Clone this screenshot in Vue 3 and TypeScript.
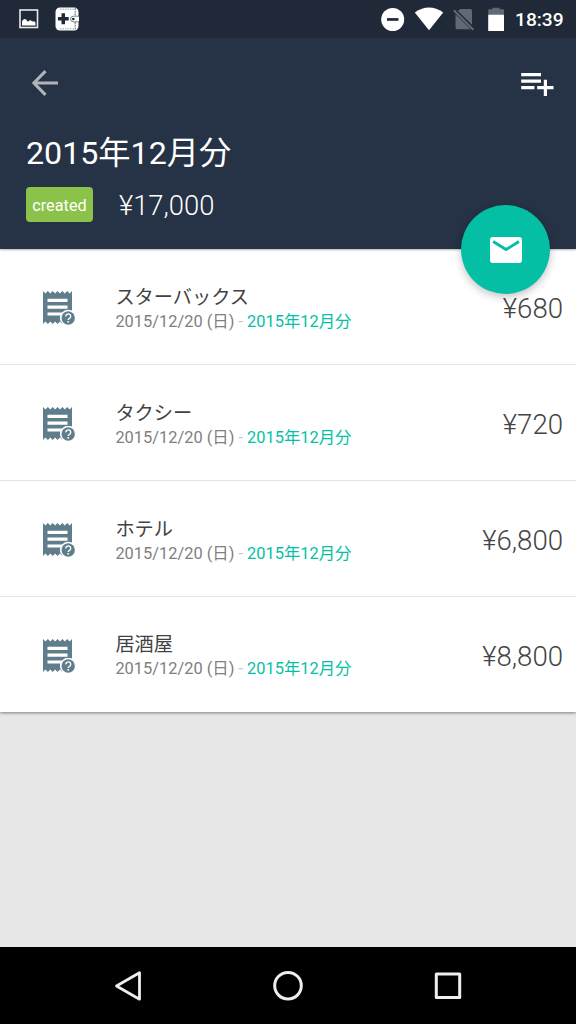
<script setup lang="ts">
interface Expense {
  name: string
  date: string
  report: string
  amount: string
}

const date = '2015/12/20 (日)'
const report = '2015年12月分'
const expenses: Expense[] = [
  { name: 'スターバックス', date, report, amount: '¥680' },
  { name: 'タクシー', date, report, amount: '¥720' },
  { name: 'ホテル', date, report, amount: '¥6,800' },
  { name: '居酒屋', date, report, amount: '¥8,800' },
]
</script>

<template>
  <div class="screen">
    <div class="status">
      <svg class="photo" width="20" height="20" viewBox="0 0 20 20">
        <rect x="1" y="1" width="17.5" height="17.5" fill="none" stroke="#e8eaec" stroke-width="1.6" />
        <path d="M3 16.5V12.3C4 10 6 9 7.600 11Q8.500 13 9.500 12.400C10.500 10.800 12 10.800 13 12.400Q16.500 11.800 16.500 14V16.500Z" fill="#fff" />
      </svg>
      <svg class="wallet" width="24" height="24" viewBox="0 0 24 24">
        <rect x=".5" y=".5" width="23" height="23" rx="4.500" fill="#fff" />
        <path d="M6.500 6.300h3.500v3.700h3.700v3.500H10v3.800H6.500v-3.800H2.900V10h3.600z" fill="#1f2938" />
        <path d="M5 2.200H19M5 21.800H19" stroke="#8a9099" stroke-width=".8" stroke-dasharray="1.500 1" fill="none" />
        <path d="M20.200 1V9M20.200 15V23" stroke="#5b636f" stroke-width=".9" stroke-dasharray="2 .7" />
        <path d="M24 9.200H18.400a2.800 2.800 0 0 0 0 5.600H24" fill="#fff" stroke="#59616d" stroke-width=".8" />
        <circle cx="18.300" cy="12" r="1.300" fill="#1f2938" />
      </svg>
      <span class="gap"></span>
      <svg width="125" height="38" viewBox="380 0 125 38" class="system">
        <circle cx="392.700" cy="19.500" r="11.500" fill="#fff" />
        <rect x="387" y="18.100" width="11.500" height="2.700" fill="#1f2938" />
        <path d="M414.800 12.500Q429 2.700 443.200 12.500L429 30.300Z" fill="#fff" />
        <path d="M460.300 9H470.500Q472 9 472 10.500V24.800L457.800 10.900ZM455.500 14.300L470.600 29.200H457.300Q455.500 29.200 455.500 27.500Z" fill="#626975" />
        <path d="M453.800 10.200L473.300 29.800" stroke="#626975" stroke-width="2" />
        <path d="M488.200 15V10Q488.200 9.200 489 9.200H492.500V7.700H499.700V9.200H503.200Q504 9.200 504 10V15Z" fill="#626975" />
        <rect x="488.200" y="14.800" width="15.800" height="16.200" rx=".6" fill="#fff" />
      </svg>
      <span class="clock">18:39</span>
    </div>

    <header class="header">
      <div class="toolbar">
        <svg width="26" height="26" viewBox="0 0 26 26">
          <path d="M26 13H2M13.500 1.200L1.900 13L13.500 24.800" fill="none" stroke="#b0b4ba" stroke-width="3.100" />
        </svg>
        <svg class="add" width="34" height="24" viewBox="0 0 34 24">
          <path d="M1.200 2.700H21M1.200 9.200H21M1.200 15.600H14.400M17.200 15.600H33.500M25.400 7.800V24" fill="none" stroke="#fff" stroke-width="3.200" />
        </svg>
      </div>
      <h1 class="title">2015年12月分</h1>
      <div class="summary">
        <span class="tag">created</span>
        <span class="total">¥17,000</span>
      </div>
      <button class="fab" aria-label="mail">
        <svg width="32" height="26" viewBox="0 0 32 26">
          <rect width="32" height="26" rx="3.100" fill="#fff" />
          <path d="M3.100 4.600L16 12.600L28.900 4.600" fill="none" stroke="#05bfa5" stroke-width="2.900" />
        </svg>
      </button>
    </header>

    <main class="list">
      <div v-for="item in expenses" :key="item.name" class="row">
        <svg class="receipt" width="34" height="36" viewBox="0 0 34 36">
          <path d="M1 1L3.420 3.400L5.840 1L8.260 3.400L10.680 1L13.100 3.400L15.520 1L17.940 3.400L20.360 1L22.780 3.400L25.200 1L27.600 3.400L30 1V34L27.600 31.600L25.200 34L22.780 31.600L20.360 34L17.940 31.600L15.520 34L13.100 31.600L10.680 34L8.260 31.600L5.840 34L3.420 31.600L1 34Z" fill="#607d8b" />
          <path d="M5.500 10.300H25.500M5.500 17.200H25.500M5.500 24H20" stroke="#fff" stroke-width="3.200" />
          <circle cx="26.200" cy="28" r="8.300" fill="#fff" />
          <circle cx="26.200" cy="28" r="6.700" fill="#607d8b" />
          <path d="M23.700 26.400a2.500 2.400 0 1 1 3.900 1.900Q26.200 29 26.200 30.100M26.200 31.100V32.700" fill="none" stroke="#fff" stroke-width="1.400" />
        </svg>
        <div class="details">
          <div class="name">{{ item.name }}</div>
          <div class="meta">{{ item.date }} <span class="dash">-</span> <span class="report">{{ item.report }}</span></div>
        </div>
        <div class="amount">{{ item.amount }}</div>
      </div>
    </main>

    <div class="space"></div>

    <nav class="nav">
      <svg width="32" height="34" viewBox="0 0 32 34">
        <path d="M27.500 3.800V30.200L4.500 17Z" fill="none" stroke="#eee" stroke-width="2.800" stroke-linejoin="round" />
      </svg>
      <svg width="32" height="34" viewBox="0 0 32 34">
        <circle cx="16" cy="16.700" r="13.300" fill="none" stroke="#eee" stroke-width="3" />
      </svg>
      <svg width="32" height="34" viewBox="0 0 32 34">
        <rect x="4.300" y="5" width="23.400" height="23.400" fill="none" stroke="#eee" stroke-width="3" stroke-linejoin="round" />
      </svg>
    </nav>
  </div>
</template>

<style>
body {
  margin: 0;
}
</style>

<style scoped>
.screen {
  display: flex;
  flex-direction: column;
  width: 576px;
  height: 1024px;
  overflow: hidden;
  background: #e7e7e7;
  font-family: Roboto, "Noto Sans CJK JP", sans-serif;
}
svg {
  display: block;
  flex: none;
}
.status {
  display: flex;
  flex: none;
  align-items: center;
  box-sizing: border-box;
  height: 38px;
  padding: 0 13px 0 19px;
  background: #1f2938;
  color: #fff;
}
.wallet {
  margin-left: 16px;
}
.gap {
  flex: 1;
}
.system {
  margin-right: 10px;
}
.clock {
  width: 48px;
  font-size: 19.2px;
  font-weight: 500;
  line-height: 38px;
  padding-top: 2px;
  text-align: right;
}
.header {
  position: relative;
  z-index: 1;
  flex: none;
  box-sizing: border-box;
  height: 211px;
  padding: 0 26px;
  background: #263245;
  color: #fff;
  box-shadow: 0 1px 2px rgba(0, 0, 0, 0.3);
}
.toolbar {
  display: flex;
  align-items: center;
  justify-content: space-between;
  height: 90px;
  margin: 0 -4px 0 6px;
}
.add {
  margin-top: 2px;
}
.title {
  margin: 0;
  font-size: 32.2px;
  font-weight: 400;
  line-height: 50px;
}
.summary {
  display: flex;
  align-items: center;
  margin-top: 9px;
}
.tag {
  box-sizing: border-box;
  width: 67px;
  height: 35px;
  border-radius: 4px;
  background: #8bc34a;
  font-size: 16.3px;
  line-height: 37px;
  text-align: center;
}
.total {
  margin-left: 26px;
  padding-top: 3px;
  font-size: 27.4px;
  font-weight: 300;
  line-height: 32px;
}
.fab {
  position: absolute;
  right: 26px;
  bottom: -45px;
  display: flex;
  align-items: center;
  justify-content: center;
  width: 89px;
  height: 89px;
  padding: 0;
  border: 0;
  border-radius: 50%;
  background: #05bfa5;
  box-shadow: 0 3px 8px rgba(0, 0, 0, 0.24);
}
.list {
  flex: none;
  background: #fff;
  box-shadow: 0 1px 3px rgba(0, 0, 0, 0.45);
}
.row {
  display: flex;
  align-items: center;
  box-sizing: border-box;
  height: 116px;
  padding: 4px 13px 0 42px;
  border-bottom: 1px solid #e3e3e3;
}
.row:last-child {
  height: 115px;
  padding-bottom: 1px;
  border-bottom: 0;
}
.receipt {
  margin-bottom: 1px;
}
.details {
  flex: 1;
  margin-left: 39.4px;
  padding-top: 1px;
}
.name {
  color: #424242;
  font-size: 19.2px;
  line-height: 24px;
}
.meta {
  color: #808080;
  font-size: 16.4px;
  line-height: 23px;
}
.dash {
  color: #c4c4c4;
}
.report {
  color: #05bfa5;
}
.amount {
  color: #444;
  font-size: 27.6px;
  font-weight: 300;
}
.space {
  flex: 1;
}
.nav {
  display: flex;
  flex: none;
  align-items: center;
  justify-content: space-between;
  box-sizing: border-box;
  height: 77px;
  padding: 0 112px;
  background: #000;
}
</style>
